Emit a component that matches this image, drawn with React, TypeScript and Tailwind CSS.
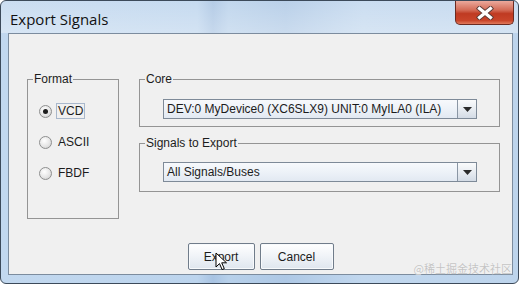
import React, { useState } from 'react';

const FONT = { fontFamily: '"Liberation Sans", Arial, sans-serif' };

const Radio: React.FC<{ label: string; checked: boolean; focused?: boolean; onSelect: () => void }> = ({ label, checked, focused, onSelect }) => (
    <div className="flex items-center h-[16px] cursor-default" onClick={onSelect}>
        <span className="w-[13px] h-[13px] rounded-full border border-[#8e8f8f] bg-[radial-gradient(circle_at_40%_35%,#ffffff,#e6e6e6_55%,#c9c9c9)] flex items-center justify-center">
            {checked && <span className="w-[5px] h-[5px] rounded-full bg-[#1e1e1e]" />}
        </span>
        <span className={`ml-[4px] px-[1px] leading-[14px] text-[12px] text-[#1c1c1c] border ${focused ? 'border-[#a9b8cc]' : 'border-transparent'}`}>{label}</span>
    </div>
);

const Combo: React.FC<{ value: string }> = ({ value }) => (
    <div className="flex w-[314px] h-[20px] border border-[#7e8a98] bg-[linear-gradient(#f7f9fc,#edf2f8_50%,#e2e9f2)]">
        <div className="flex-1 pl-[3px] leading-[18px] text-[12px] text-[#1c1c1c] whitespace-nowrap overflow-hidden">{value}</div>
        <div className="w-[19px] border-l border-[#8a96a4] bg-[linear-gradient(#fafbfc,#e4e9ef_60%,#d3dbe5)] flex items-center justify-center">
            <svg width="9" height="5" viewBox="0 0 9 5"><path d="M0 0h9L4.5 5z" fill="#2b2b2b" /></svg>
        </div>
    </div>
);

const Group: React.FC<{ title: string; className?: string; children: React.ReactNode }> = ({ title, className, children }) => (
    <fieldset className={`border border-[#949494] ${className || ''}`}>
        <legend className="ml-[5px] px-[1px] text-[12px] leading-[14px] text-[#1c1c1c]">{title}</legend>
        {children}
    </fieldset>
);

const Button: React.FC<{ label: string; width: string }> = ({ label, width }) => (
    <button className={`${width} h-[27px] rounded-[2px] border border-[#707c8a] bg-[linear-gradient(#ffffff,#f1f4f8_45%,#dfe6ee)] text-[12px] text-[#1c1c1c] shadow-[inset_0_0_0_1px_#f8fafc]`}>
        {label}
    </button>
);

export default function App() {
    const [format, setFormat] = useState('VCD');

    return (
        <div className="w-[521px] h-[284px] bg-white" style={FONT}>
            <div className="relative w-[519px] h-[284px] rounded-[6px] border border-[#3c4a5a] flex flex-col overflow-hidden bg-[linear-gradient(to_right,#c2d8ef,#bcd4ed_38%,#a8c3e2_41%,#b7d0ea_44%,#aec8e5_55%,#c1d7ee_70%,#bdd4ec)]">
                {/* title bar */}
                <div className="h-[32px] flex items-start bg-[linear-gradient(rgba(255,255,255,0.15),rgba(255,255,255,0.35))]">
                    <div className="pl-[9px] pt-[7px] text-[15px] text-[#111]" style={{ fontFamily: '"Open Sans", "Noto Sans", sans-serif' }}>Export Signals</div>
                    <div className="ml-auto mr-[4px] w-[59px] h-[24px] rounded-b-[5px] border border-t-0 border-[#6b2a20] bg-[linear-gradient(#eba99c,#d36a55_40%,#bf3a22_55%,#c9452a_85%,#e07a5c)] flex items-center justify-center">
                        <svg width="18" height="14" viewBox="0 0 18 14">
                            <path d="M3.5 2.5l11 9M14.5 2.5l-11 9" stroke="#5a3a36" strokeWidth="5" strokeLinecap="square" />
                            <path d="M3.5 2.5l11 9M14.5 2.5l-11 9" stroke="#ffffff" strokeWidth="3.2" strokeLinecap="square" />
                        </svg>
                    </div>
                </div>

                {/* client area */}
                <div className="ml-[7px] mr-[5px] mb-[8px] flex-1 border border-[#7c8c9e] bg-[#f0f0f0] flex flex-col">
                    <div className="flex pt-[38px] pl-[18px]">
                        <Group title="Format" className="w-[92px] h-[147px]">
                            <div className="pt-[17px] pl-[11px] flex flex-col gap-[15px]">
                                {['VCD', 'ASCII', 'FBDF'].map(f => (
                                    <Radio key={f} label={f} checked={format === f} focused={format === f} onSelect={() => setFormat(f)} />
                                ))}
                            </div>
                        </Group>
                        <div className="ml-[20px] w-[361px] flex flex-col">
                            <Group title="Core" className="h-[55px]">
                                <div className="pt-[13px] pl-[23px]">
                                    <Combo value="DEV:0 MyDevice0 (XC6SLX9) UNIT:0 MyILA0 (ILA)" />
                                </div>
                            </Group>
                            <Group title="Signals to Export" className="mt-[9px] h-[56px]">
                                <div className="pt-[12px] pl-[23px]">
                                    <Combo value="All Signals/Buses" />
                                </div>
                            </Group>
                        </div>
                    </div>

                    <div className="mt-[24px] flex justify-center gap-[5px]">
                        <Button label="Export" width="w-[67px]" />
                        <Button label="Cancel" width="w-[74px]" />
                    </div>
                </div>

                {/* mouse pointer */}
                <svg className="absolute left-[214px] top-[251px]" width="12" height="19" viewBox="0 0 12 19">
                    <path d="M1 1v14l3.5-3.4 2.6 6 2.2-1-2.6-5.8H11.5z" fill="#fff" stroke="#000" strokeWidth="1" strokeLinejoin="round" />
                </svg>

                {/* watermark */}
                <div className="absolute right-[6px] bottom-[8px] text-[11px] leading-[13px] text-[#c4c4c4]" style={{ fontFamily: '"Noto Sans CJK SC", sans-serif', textShadow: '0 0 1px #ffffff' }}>
                    @稀土掘金技术社区
                </div>
            </div>
        </div>
    );
}
